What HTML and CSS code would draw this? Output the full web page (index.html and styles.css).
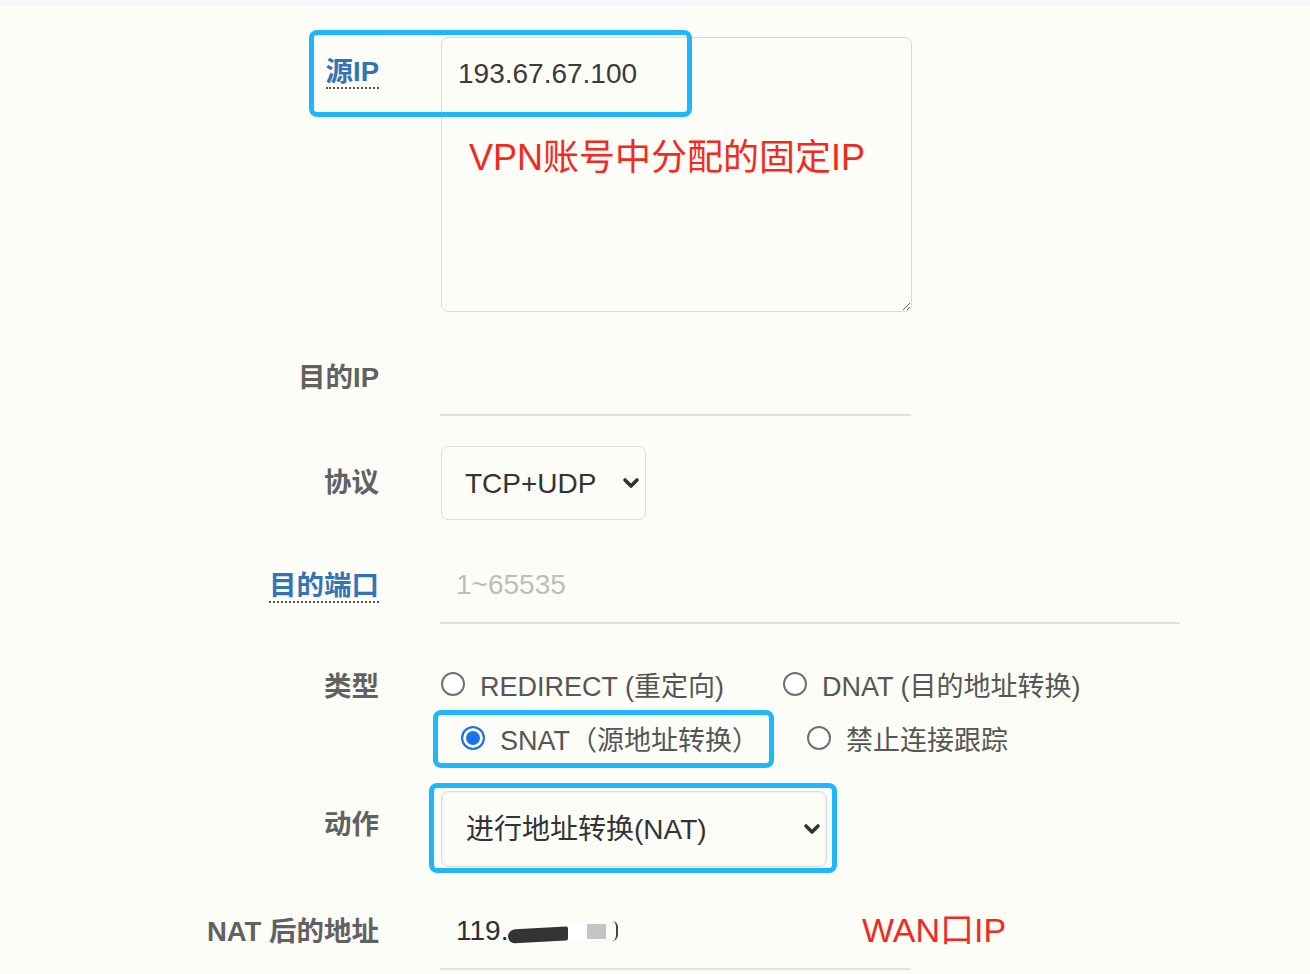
FILE: index.html
```html
<!DOCTYPE html>
<html lang="zh-CN">
<head>
<meta charset="utf-8">
<title>NAT 规则</title>
<link rel="stylesheet" href="styles.css">
</head>
<body>
<div class="topband"></div>
<form class="form">
  <div class="row row-src">
    <div class="label"><span class="hint">源IP</span></div>
    <div class="control ta-wrap">
      <textarea class="textarea">193.67.67.100</textarea>
      <div class="note note-vpn">VPN账号中分配的固定IP</div>
    </div>
    <div class="mark mark-src"></div>
  </div>

  <div class="row row-dst">
    <div class="label">目的IP</div>
    <div class="control"><input class="line-input w-short" type="text"></div>
  </div>

  <div class="row row-proto">
    <div class="label">协议</div>
    <div class="control">
      <div class="select-wrap sel-proto">
        <select class="select"><option>TCP+UDP</option></select>
        <svg class="chev" width="18" height="12" viewBox="0 0 18 12"><polyline points="3,3 9,9 15,3" fill="none" stroke="#333" stroke-width="3.6" stroke-linecap="round" stroke-linejoin="round"/></svg>
      </div>
    </div>
  </div>

  <div class="row row-port">
    <div class="label"><span class="hint">目的端口</span></div>
    <div class="control"><input class="line-input w-long" type="text" placeholder="1~65535"></div>
  </div>

  <div class="row row-type">
    <div class="label label-top">类型</div>
    <div class="control radios">
      <div class="radio-row">
        <label class="opt"><input type="radio" name="t" class="radio"><span>REDIRECT (重定向)</span></label>
        <label class="opt"><input type="radio" name="t" class="radio"><span>DNAT (目的地址转换)</span></label>
      </div>
      <div class="radio-row shifted">
        <label class="opt"><input type="radio" name="t" class="radio" checked><span>SNAT（源地址转换）</span></label>
        <label class="opt"><input type="radio" name="t" class="radio"><span>禁止连接跟踪</span></label>
      </div>
      <div class="mark mark-snat"></div>
    </div>
  </div>

  <div class="row row-act">
    <div class="label label-act">动作</div>
    <div class="control">
      <div class="select-wrap sel-act">
        <select class="select select-act"><option>进行地址转换(NAT)</option></select>
        <svg class="chev" width="18" height="12" viewBox="0 0 18 12"><polyline points="3,3 9,9 15,3" fill="none" stroke="#333" stroke-width="3.6" stroke-linecap="round" stroke-linejoin="round"/></svg>
      </div>
      <div class="mark mark-act"></div>
    </div>
  </div>

  <div class="row row-nat">
    <div class="label">NAT 后的地址</div>
    <div class="control nat-wrap">
      <div class="line-input w-short value">119.<span class="redact-black"></span><span class="redact-white"></span><span class="redact-gray"></span><span class="redact-tail"></span></div>
      <div class="note note-wan">WAN口IP</div>
    </div>
  </div>
</form>
</body>
</html>
```

FILE: styles.css
```css
* { box-sizing: border-box; }

html, body {
  margin: 0;
  padding: 0;
  background: #fdfdf8;
  font-family: "Liberation Sans", "Noto Sans CJK SC", sans-serif;
}

.topband {
  height: 5px;
  background: #f5f6f7;
}

.form {
  padding-top: 32px;
  display: flex;
  flex-direction: column;
}

.row {
  position: relative;
  display: grid;
  grid-template-columns: 379px 1fr;
  column-gap: 61px;
  align-items: center;
}

.label {
  text-align: right;
  font-size: 27.5px;
  font-weight: bold;
  color: #616161;
  line-height: 34px;
  white-space: nowrap;
}

.hint {
  display: inline-block;
  color: #3473b5;
  line-height: 30px;
  border-bottom: 2px dotted #555;
}

.control {
  position: relative;
}

/* row 1 */
.row-src { align-items: start; }
.row-src .label { padding-top: 18px; }
.ta-wrap { margin-left: 1px; width: 471px; height: 275px; }
.textarea {
  display: block;
  width: 471px;
  height: 275px;
  border: 1.5px solid #dadada;
  border-radius: 7px;
  background: #fdfdf8;
  padding: 19px 16px;
  font-family: "Liberation Sans", "Noto Sans CJK SC", sans-serif;
  font-size: 28px;
  line-height: 34px;
  color: #3a3a3a;
  resize: both;
  outline: none;
}

.note {
  position: absolute;
  color: #f4291e;
  line-height: 40px;
  white-space: nowrap;
  font-family: "Liberation Sans", "Noto Sans CJK SC", sans-serif;
  font-weight: normal;
}
.note-vpn { left: 28px; top: 101px; font-size: 36px; }

.mark {
  position: absolute;
  border: 5px solid #20b6fb;
  border-radius: 8px;
  pointer-events: none;
}
.mark-src { left: 309px; top: -7px; width: 383px; height: 87px; }

/* line inputs */
.line-input {
  display: block;
  height: 76px;
  border: none;
  border-bottom: 2px solid #e1e1e1;
  background: transparent;
  padding: 0 16px;
  font-family: "Liberation Sans", "Noto Sans CJK SC", sans-serif;
  font-size: 28px;
  color: #333;
  outline: none;
}
.line-input::placeholder { color: #bdbdbd; }
.w-short { width: 471px; }
.w-long { width: 740px; }

.row-dst { margin-top: 28px; }
.row-proto { margin-top: 30px; }
.row-port { margin-top: 28px; }
.row-type { margin-top: 36px; align-items: start; }
.row-act { margin-top: 23px; }
.row-nat { margin-top: 27px; }

/* selects */
.select-wrap {
  position: relative;
  margin-left: 1px;
}
.select {
  display: block;
  width: 100%;
  height: 100%;
  appearance: none;
  -webkit-appearance: none;
  border: 1.5px solid #dcdcdc;
  border-radius: 7px;
  background: #fdfdf8;
  padding: 0 40px 0 23px;
  font-family: "Liberation Sans", "Noto Sans CJK SC", sans-serif;
  font-size: 28px;
  color: #333;
  outline: none;
}
.sel-proto { width: 205px; height: 74px; }
.sel-act { width: 386px; height: 76px; }
.select-act {
  box-shadow: inset 0 0 3px rgba(0,0,0,0.12);
  padding-left: 24px;
}
.chev {
  position: absolute;
  top: 50%;
  transform: translateY(-50%);
  right: 6px;
  pointer-events: none;
}

.label-act { padding-bottom: 8px; }
.mark-act { left: -11px; top: -8px; width: 408px; height: 90px; }

/* radios */
.label-top { line-height: 54px; }
.radios { position: relative; }
.radio-row {
  display: grid;
  grid-template-columns: 342px auto;
  height: 54px;
  align-items: center;
}
.radio-row:first-child { margin-top: -3px; }
.radio-row.shifted { padding-left: 20px; grid-template-columns: 346px auto; padding-bottom: 3px; height: 57px; }
.opt {
  display: flex;
  align-items: center;
  gap: 15px;
  font-size: 27px;
  color: #555;
  white-space: nowrap;
  cursor: pointer;
}
.opt .radio {
  appearance: none;
  -webkit-appearance: none;
  margin: 0 0 0 1px;
  width: 24px;
  height: 24px;
  border: 2px solid #707070;
  border-radius: 50%;
  background: #fff;
  flex: none;
}
.opt .radio:checked {
  border-color: #1a74e9;
  background: #1a74e9;
  box-shadow: inset 0 0 0 3px #fff;
}
.mark-snat { left: -7px; top: 50px; width: 341px; height: 58px; }

/* NAT value */
.nat-wrap { display: flex; align-items: center; }
.value {
  display: flex;
  align-items: center;
  color: #2e2e2e;
}
.redact-black {
  display: inline-block;
  width: 60px;
  height: 14px;
  margin-top: 8px;
  background: #333;
  border-radius: 7px 2px 2px 7px;
  transform: skewY(-3deg);
}
.redact-white {
  display: inline-block;
  width: 19px;
  height: 18px;
  background: #fff;
}
.redact-gray {
  display: inline-block;
  width: 19px;
  height: 15px;
  background: #c4c4c4;
}
.redact-tail {
  display: inline-block;
  width: 6px;
  height: 20px;
  margin-left: 6px;
  border-right: 2px solid #444;
  border-radius: 0 10px 10px 0;
}
.note-wan { left: 422px; top: 16px; font-size: 34px; }
```
